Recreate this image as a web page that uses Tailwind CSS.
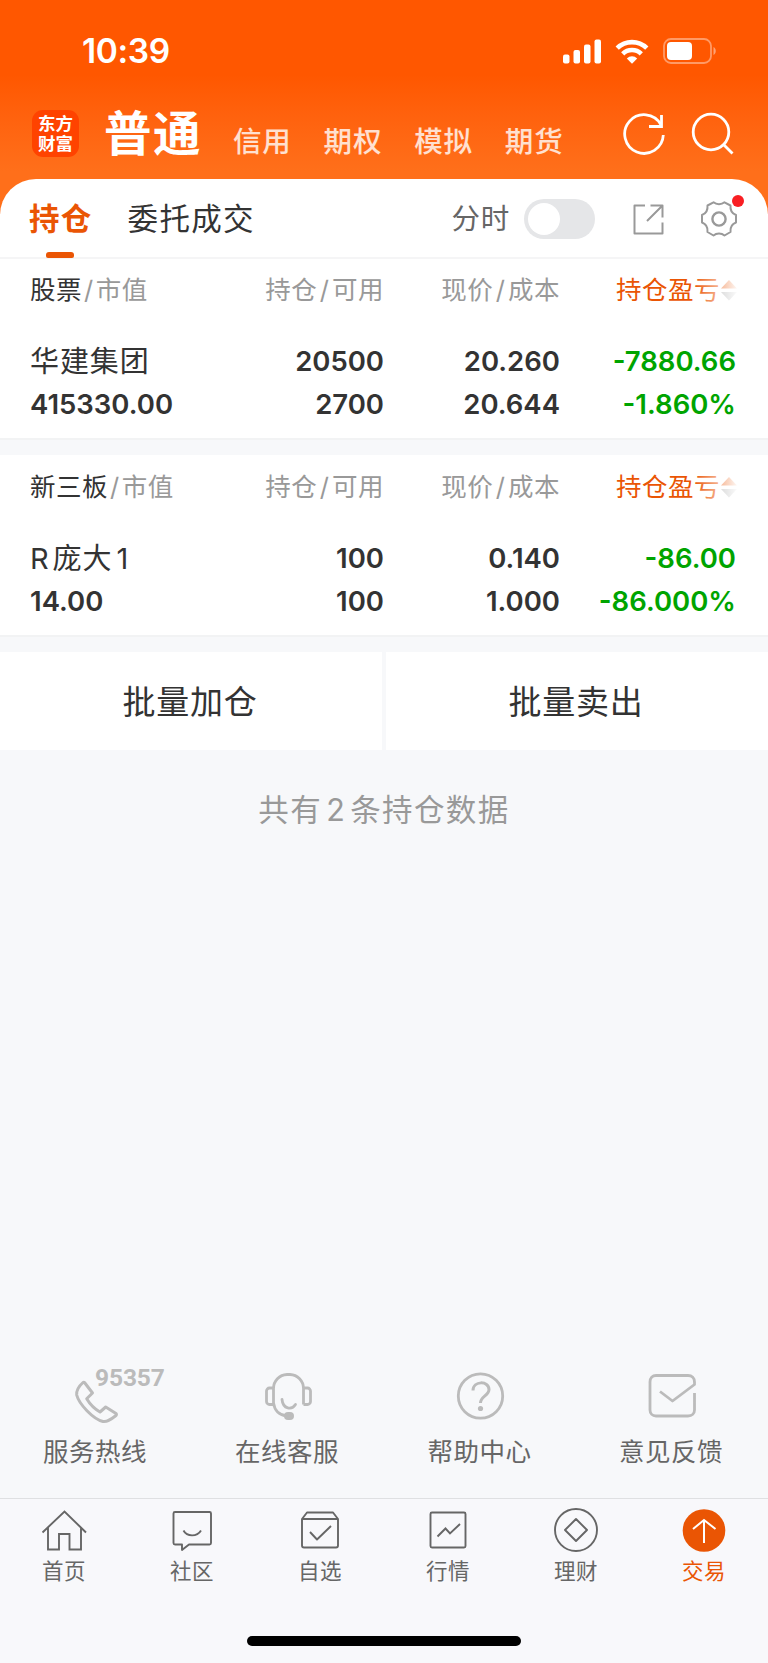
<!DOCTYPE html>
<html lang="zh-CN">
<head>
    <meta charset="UTF-8">
    <meta name="viewport" content="width=device-width, initial-scale=1.0">
    <title>持仓</title>
    <script src="https://cdn.jsdelivr.net/npm/@tailwindcss/browser@4"></script>
</head>
<body class="bg-[#f7f8fa] font-['Inter','Noto_Sans_CJK_SC',sans-serif] text-[#333]">
    <div class="w-[768px] h-[1663px] flex flex-col overflow-hidden">
        <!-- Header -->
        <header class="h-[214px] shrink-0 bg-linear-to-b from-[#ff5700] from-35% to-[#ff6f1a] to-80%">
            <div class="h-[102px] flex items-center justify-between pl-[82px] pr-[51px]">
                <span class="pt-0.5 text-[33.5px] font-semibold text-white leading-none tracking-[-0.4px]">10:39</span>
                <div class="flex items-center text-white">
                    <svg class="w-[39px] h-[25px]" viewBox="0 0 39 25" fill="currentColor">
                        <rect x="0" y="15.5" width="6.5" height="9" rx="2"/>
                        <rect x="10.5" y="11" width="6.5" height="13.5" rx="2"/>
                        <rect x="21" y="5.5" width="6.5" height="19" rx="2"/>
                        <rect x="31.5" y="0.5" width="6.5" height="24" rx="2"/>
                    </svg>
                    <svg class="ml-[13px] w-[34px] h-[25px]" viewBox="0 0 34 25" fill="none" stroke="currentColor" stroke-width="4.6">
                        <path d="M2.2 9.2a21 21 0 0 1 29.6 0"/>
                        <path d="M7.7 14.8a13.3 13.3 0 0 1 18.6 0"/>
                        <path d="M11.8 19.4a7.6 7.6 0 0 1 10.4 0L17 24.8z" fill="currentColor" stroke="none"/>
                    </svg>
                    <svg class="ml-3.5 w-[54px] h-[26px]" viewBox="0 0 54 26">
                        <rect x="1" y="1" width="47" height="24" rx="7" fill="none" stroke="#fff" stroke-opacity=".4" stroke-width="1.8"/>
                        <rect x="4" y="4" width="25" height="18" rx="4" fill="#fff"/>
                        <path d="M50.5 9v8c3-1.4 3-6.6 0-8z" fill="#fff" fill-opacity=".45"/>
                    </svg>
                </div>
            </div>
            <div class="h-[77px] flex items-start pl-8 pr-[33px] text-white">
                <div class="mt-2 size-[47px] rounded-[11px] bg-[#ff4300] flex flex-col items-center justify-center text-[17.5px] leading-[19.5px] font-bold">
                    <span>东方</span>
                    <span>财富</span>
                </div>
                <span class="ml-[25px] mt-[9px] w-[98px] text-[47.5px] leading-[46px] font-bold tracking-[1.5px] whitespace-nowrap">普通</span>
                <nav class="ml-[31px] mt-5 flex gap-8 text-[28.5px] leading-[40px] font-medium tracking-[0.8px] text-white/80 whitespace-nowrap">
                    <span>信用</span>
                    <span>期权</span>
                    <span>模拟</span>
                    <span>期货</span>
                </nav>
                <svg class="ml-auto mt-[10px] size-[44px]" viewBox="0 0 44 44" fill="none" stroke="currentColor" stroke-width="2.8">
                    <path d="M38.8 12.5A19.3 19.3 0 1 0 41.3 23"/>
                    <path d="M39.5 3v11.5H27"/>
                </svg>
                <svg class="ml-[25px] mt-[10px] size-[44px]" viewBox="0 0 44 44" fill="none" stroke="currentColor" stroke-width="2.8">
                    <circle cx="20" cy="20" r="17.8"/>
                    <path d="M32.5 32.5l9 9"/>
                </svg>
            </div>
        </header>

        <!-- Tabs -->
        <section class="-mt-[35px] h-[80px] shrink-0 bg-white rounded-t-[36px] border-b-2 border-[#f5f5f6] flex items-center pt-0.5 pl-[29px] pr-[30px] whitespace-nowrap">
            <div class="relative h-full flex items-center text-[30.5px] font-bold tracking-[1.3px] text-[#ea5504]">
                持仓
                <span class="absolute -bottom-px left-[17px] w-[28px] h-[6px] rounded-t-[3px] rounded-b-xs bg-[#ea5504]"></span>
            </div>
            <div class="ml-[35px] text-[30.5px] tracking-[1.3px]">委托成交</div>
            <div class="ml-auto text-[28.5px] tracking-[0.8px] text-[#666]">分时</div>
            <div class="ml-3.5 w-[71px] h-10 rounded-full bg-[#e5e6e8] p-1">
                <div class="size-8 rounded-full bg-white"></div>
            </div>
            <svg class="ml-[38px] w-[31px] h-[31px]" viewBox="0 0 31 31" fill="none" stroke="#999" stroke-width="2" stroke-linejoin="round">
                <path d="M12 1.5H1.5v28h28V18.5"/>
                <path d="M17.5 1.5h12v12M29 2L14 17"/>
            </svg>
            <div class="relative ml-9">
                <svg class="w-[38px] h-[38px]" viewBox="0 0 38 38" fill="none" stroke="#999" stroke-width="2" stroke-linejoin="round">
                    <path d="M13.5 2.3C16.5 4.800 21.500 4.800 24.5 2.3L30.5 5.5C30 11 32 13.500 36 15V22.5C32 24 30 27 30.5 32L24.5 35.5C21.500 32.8 16.500 32.8 13.5 35.5L7.5 32C8 27 6 24 2 22.5V15C6 13.500 8 11 7.5 5.5Z"/>
                    <circle cx="19" cy="19" r="6.6" stroke-width="2.4"/>
                </svg>
                <span class="absolute -top-[5px] -right-[6px] size-3 rounded-full bg-[#f91e23]"></span>
            </div>
        </section>

        <!-- Holdings: stocks -->
        <section class="h-[181px] shrink-0 bg-white border-b-2 border-[#f2f3f4] pl-[30px] pr-[33px] whitespace-nowrap">
            <div class="h-[62px] grid grid-cols-[177px_177px_176px_176px] items-center text-[25.5px] tracking-[0.5px] text-[#999]">
                <div><span class="text-[#333]">股票</span><span class="mx-0.5">/</span>市值</div>
                <div class="text-right">持仓<span class="mx-[2.5px]">/</span>可用</div>
                <div class="text-right">现价<span class="mx-[2.5px]">/</span>成本</div>
                <div class="relative flex items-center justify-end text-[#ea5504]">
                    持仓盈亏
                    <svg class="ml-px -mr-px w-[16px] h-[22px]" viewBox="0 0 16 22">
                        <path d="M8 1l8 8.5H0z" fill="#ea5504"/>
                        <path d="M8 21.5L0 13h16z" fill="#aaa"/>
                    </svg>
                    <span class="absolute -right-px inset-y-0 w-[44px] bg-linear-to-r from-white/0 to-white/95"></span>
                </div>
            </div>
            <div class="mt-[19px] grid grid-cols-[177px_177px_176px_176px] leading-[43px] text-[27.5px] font-semibold">
                <div class="text-[29px] font-normal tracking-[0.9px]">华建集团</div>
                <div class="text-right">20500</div>
                <div class="text-right">20.260</div>
                <div class="text-right text-[#00a400]">-7880.66</div>
                <div>415330.00</div>
                <div class="text-right">2700</div>
                <div class="text-right">20.644</div>
                <div class="text-right text-[#00a400]">-1.860%</div>
            </div>
        </section>

        <!-- Holdings: NEEQ -->
        <section class="mt-[15px] h-[182px] shrink-0 bg-white border-b-2 border-[#f2f3f4] pt-px pl-[30px] pr-[33px] whitespace-nowrap">
            <div class="h-[62px] grid grid-cols-[177px_177px_176px_176px] items-center text-[25.5px] tracking-[0.5px] text-[#999]">
                <div><span class="text-[#333]">新三板</span><span class="mx-0.5">/</span>市值</div>
                <div class="text-right">持仓<span class="mx-[2.5px]">/</span>可用</div>
                <div class="text-right">现价<span class="mx-[2.5px]">/</span>成本</div>
                <div class="relative flex items-center justify-end text-[#ea5504]">
                    持仓盈亏
                    <svg class="ml-px -mr-px w-[16px] h-[22px]" viewBox="0 0 16 22">
                        <path d="M8 1l8 8.5H0z" fill="#ea5504"/>
                        <path d="M8 21.5L0 13h16z" fill="#aaa"/>
                    </svg>
                    <span class="absolute -right-px inset-y-0 w-[44px] bg-linear-to-r from-white/0 to-white/95"></span>
                </div>
            </div>
            <div class="mt-[19px] grid grid-cols-[177px_177px_176px_176px] leading-[43px] text-[27.5px] font-semibold">
                <div class="text-[29px] font-normal tracking-[0.9px]">R<span class="ml-[3px] mr-1">庞大</span>1</div>
                <div class="text-right">100</div>
                <div class="text-right">0.140</div>
                <div class="text-right text-[#00a400]">-86.00</div>
                <div>14.00</div>
                <div class="text-right">100</div>
                <div class="text-right">1.000</div>
                <div class="text-right text-[#00a400]">-86.000%</div>
            </div>
        </section>

        <!-- Batch actions -->
        <div class="mt-[15px] h-[98px] shrink-0 grid grid-cols-2 gap-1 text-[33px] tracking-[0.8px]">
            <button class="bg-white pt-1 pr-0.5">批量加仓</button>
            <button class="bg-white pt-1 pr-0.5">批量卖出</button>
        </div>

        <p class="mt-[37px] text-center text-[30.5px] leading-[46px] tracking-[1.4px] text-[#999]">共有<span class="mx-1">2</span>条持仓数据</p>

        <!-- Services -->
        <div class="mt-auto h-[130px] shrink-0 grid grid-cols-4 text-[25.5px] tracking-[0.5px] text-[#666]">
            <div class="flex flex-col items-center">
                <div class="relative">
                    <svg class="size-[56px]" viewBox="0 0 56 56" fill="none" stroke="#bbb" stroke-width="3" stroke-linejoin="round">
                        <path d="M15 14.5C10.500 18.500 8.200 22.500 8.700 27C11 36 25 51 35 53.500C39 54.300 43 51.500 48 47.500C48.600 46.800 48.600 46 48 45.500L37.700 39L32 44C26.500 41 21.500 35.500 18.700 30.800L24.500 25L16.500 14.500C16 14 15.500 14 15 14.500Z"/>
                    </svg>
                    <span class="absolute left-[27px] top-px text-[24.5px] leading-[18px] font-['Roboto'] font-bold tracking-[-0.1px] text-[#bbb]">95357</span>
                </div>
                <span class="mt-[9px] mr-0.5">服务热线</span>
            </div>
            <div class="flex flex-col items-center">
                <svg class="size-[56px]" viewBox="0 0 56 56" fill="none" stroke="#bbb" stroke-width="2.8">
                    <path d="M13.5 36V20.5A14 14 0 0 1 27 6.5H30A14 14 0 0 1 43.5 20.5V36.5"/>
                    <path d="M13.5 20H9.5a3 3 0 0 0-3 3v10.5a3 3 0 0 0 3 3h4M43.5 20h4a3 3 0 0 1 3 3v10.5a3 3 0 0 1-3 3h-4"/>
                    <path d="M13.5 35C14.5 42 19 47.5 27 47.8"/>
                    <path d="M22 31.5C23 41.5 32 42 35.5 36.5" stroke-linecap="round"/>
                    <rect x="24" y="44" width="10" height="8" rx="4" fill="#bbb" stroke="none"/>
                </svg>
                <span class="mt-[9px] mr-0.5">在线客服</span>
            </div>
            <div class="flex flex-col items-center">
                <svg class="size-[56px]" viewBox="0 0 56 56" fill="none" stroke="#bbb" stroke-width="2.8">
                    <circle cx="28.5" cy="28" r="22.2"/>
                    <path d="M21 22.5c0-10 16-10 16-1 0 6-8.500 7-8.500 13.500" stroke-width="3"/>
                    <circle cx="28.5" cy="40.5" r="2.6" fill="#bbb" stroke="none"/>
                </svg>
                <span class="mt-[9px] mr-px">帮助中心</span>
            </div>
            <div class="flex flex-col items-center">
                <svg class="size-[56px]" viewBox="0 0 56 56" fill="none" stroke="#bbb" stroke-width="2.8" stroke-linejoin="round">
                    <path d="M16 23.5L28.5 33L50.5 16.5V14C50.5 10 48 7.5 44 7.5H12C8.5 7.5 6 10 6 14V42C6 45.5 8.5 48 12 48H44C48 48 50.5 45.5 50.5 42V25"/>
                </svg>
                <span class="mt-[9px] mr-0.5">意见反馈</span>
            </div>
        </div>

        <!-- Bottom navigation -->
        <footer class="h-[165px] shrink-0 border-t border-[#dfe0e2] bg-[#f8f8fb] flex flex-col items-center justify-between">
            <nav class="w-full grid grid-cols-6 pt-[7px] text-[21.5px] leading-[34px] tracking-[0.5px] text-[#666]">
                <div class="flex flex-col items-center">
                    <svg class="size-[48px]" viewBox="0 0 48 48" fill="none" stroke="currentColor" stroke-width="1.9">
                        <path d="M2.5 26.5L24.5 5.5L46 26.5M8 21.5V43.5H19V28H29.5V43.5H41V21.5"/>
                    </svg>
                    <span>首页</span>
                </div>
                <div class="flex flex-col items-center">
                    <svg class="size-[48px]" viewBox="0 0 48 48" fill="none" stroke="currentColor" stroke-width="1.9" stroke-linejoin="round">
                        <path d="M7 6H41.5Q43 6 43 7.5V37Q43 38.5 41.5 38.5H21L14 44V38.5H7Q5.5 38.5 5.5 37V7.5Q5.5 6 7 6Z"/>
                        <path d="M15.5 24.5C19 31 29 31 33 24.5"/>
                    </svg>
                    <span>社区</span>
                </div>
                <div class="flex flex-col items-center">
                    <svg class="size-[48px]" viewBox="0 0 48 48" fill="none" stroke="currentColor" stroke-width="1.9" stroke-linejoin="round">
                        <path d="M6 13L11 6.5H37L42 13V39.5Q42 41.5 40 41.5H8Q6 41.5 6 39.5ZM6 13H42"/>
                        <path d="M14 26L21 33.5L35 20"/>
                    </svg>
                    <span>自选</span>
                </div>
                <div class="flex flex-col items-center">
                    <svg class="size-[48px]" viewBox="0 0 48 48" fill="none" stroke="currentColor" stroke-width="1.9">
                        <rect x="6.5" y="6.5" width="35" height="35" rx="1.5"/>
                        <path d="M13.5 30.5L21.5 22.5L26 27.5L36 18"/>
                    </svg>
                    <span>行情</span>
                </div>
                <div class="flex flex-col items-center">
                    <svg class="size-[48px]" viewBox="0 0 48 48" fill="none" stroke="currentColor" stroke-width="1.9" stroke-linejoin="round">
                        <circle cx="24" cy="24" r="21"/>
                        <path d="M24 13L35 24L24 35L13 24Z"/>
                    </svg>
                    <span>理财</span>
                </div>
                <div class="flex flex-col items-center text-[#ea5504]">
                    <svg class="size-[48px]" viewBox="0 0 48 48" fill="none" stroke="#fff" stroke-width="2">
                        <circle cx="24" cy="24.5" r="21.3" fill="#ea5504" stroke="none"/>
                        <path d="M24 37V14M13 23L24 14L35.5 23"/>
                    </svg>
                    <span>交易</span>
                </div>
            </nav>
            <div class="mb-[17px] w-[274px] h-[10px] rounded-full bg-black"></div>
        </footer>
    </div>
</body>
</html>
